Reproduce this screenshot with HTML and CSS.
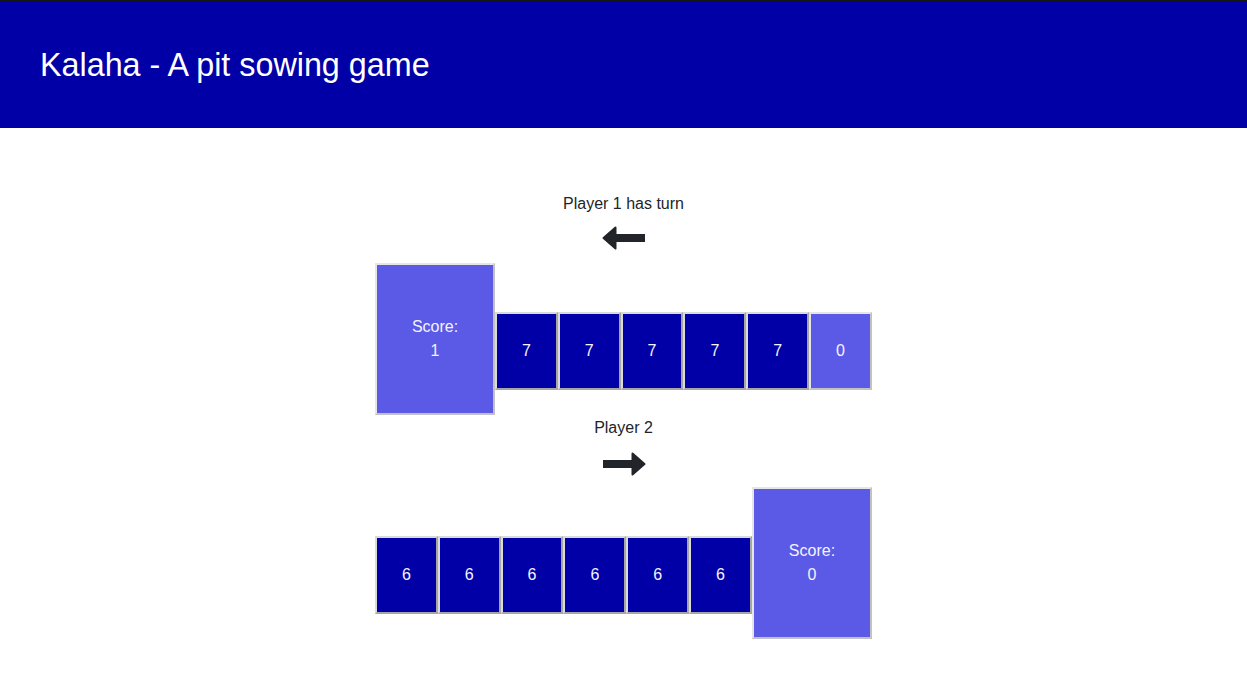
FILE: index.html
```html
<!DOCTYPE html>
<html lang="en">
<head>
<meta charset="utf-8">
<title>Kalaha</title>
<link rel="stylesheet" href="styles.css">
</head>
<body>
<header class="topbar">
  <h1 class="title">Kalaha - A pit sowing game</h1>
</header>
<main class="game">
  <section class="side side-one">
    <p class="turn">Player 1 has turn</p>
    <svg class="arrow" viewBox="0 0 44 24" width="44" height="24" aria-hidden="true">
      <polygon points="13.5,1.5 1.5,12 13.5,22.5" fill="#212529" stroke="#212529" stroke-width="2" stroke-linejoin="round"/>
      <rect x="12" y="8" width="31" height="8" fill="#212529"/>
    </svg>
    <div class="row">
      <div class="store"><span>Score:</span><span>1</span></div>
      <div class="pit">7</div>
      <div class="pit">7</div>
      <div class="pit">7</div>
      <div class="pit">7</div>
      <div class="pit">7</div>
      <div class="pit pit-empty">0</div>
    </div>
  </section>
  <section class="side side-two">
    <p class="turn">Player 2</p>
    <svg class="arrow" viewBox="0 0 44 24" width="44" height="24" aria-hidden="true">
      <polygon points="30.5,1.5 42.5,12 30.5,22.5" fill="#212529" stroke="#212529" stroke-width="2" stroke-linejoin="round"/>
      <rect x="1" y="8" width="31" height="8" fill="#212529"/>
    </svg>
    <div class="row">
      <div class="pit">6</div>
      <div class="pit">6</div>
      <div class="pit">6</div>
      <div class="pit">6</div>
      <div class="pit">6</div>
      <div class="pit">6</div>
      <div class="store"><span>Score:</span><span>0</span></div>
    </div>
  </section>
</main>
</body>
</html>
```
FILE: styles.css
```css
* { box-sizing: border-box; }

body {
  margin: 0;
  font-family: "Liberation Sans", Arial, sans-serif;
  background: #ffffff;
  color: #212529;
}

.topbar {
  height: 128px;
  background: #0000a6;
  border-top: 1px solid #151515;
  padding: 46px 40px 0;
}

.title {
  margin: 0;
  font-size: 32.3px;
  font-weight: normal;
  line-height: normal;
  color: #ffffff;
}

.game {
  padding-top: 67px;
}

.side-two {
  margin-top: 4px;
}

.turn {
  margin: 0;
  text-align: center;
  font-size: 16px;
  line-height: 18px;
  color: #212529;
}

.arrow {
  display: block;
  margin: 13px auto 0;
}

.side-two .arrow {
  margin-top: 15px;
}

.row {
  display: flex;
  align-items: flex-end;
  width: 497px;
  margin: 13px auto 0;
}

.side-two .row {
  margin-top: 11px;
}

.store {
  width: 120px;
  height: 152px;
  flex: none;
  display: flex;
  flex-direction: column;
  align-items: center;
  justify-content: center;
  background: #5a5ae6;
  color: #f4f4ff;
  font-size: 16px;
  line-height: 24px;
  border: 2px solid;
  border-color: #e6e6e6 #c2c2c2 #c2c2c2 #e6e6e6;
}

.pit {
  flex: 1 1 0;
  height: 78px;
  margin-bottom: 25px;
  display: flex;
  align-items: center;
  justify-content: center;
  background: #0000a6;
  color: #f4f4ff;
  font-size: 16px;
  border: 2px solid;
  border-color: #dadada #a6a6a6 #a6a6a6 #dadada;
}

.pit-empty {
  background: #5a5ae6;
  border-color: #e6e6e6 #c2c2c2 #c2c2c2 #e6e6e6;
}
```
